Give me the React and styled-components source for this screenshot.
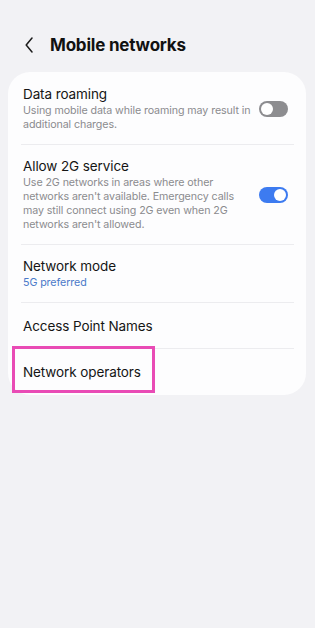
import React from "react";
import styled, { createGlobalStyle } from "styled-components";

const Global = createGlobalStyle`
  html, body { margin: 0; padding: 0; background: #f2f2f5; }
  body { font-family: Inter, "Noto Sans", "Liberation Sans", sans-serif; -webkit-font-smoothing: antialiased; }
  * { box-sizing: border-box; }
`;

const Page = styled.div`
  width: 315px;
  min-height: 628px;
  background: #f2f2f5;
  padding: 33px 9px 0 8px;
`;

const Header = styled.div`
  display: flex;
  align-items: center;
  height: 24px;
  padding-left: 17px;
  gap: 17px;
`;

const Title = styled.h1`
  margin: 0;
  font-size: 17px;
  line-height: 24px;
  font-weight: 700;
  color: #111;
  letter-spacing: -0.2px;
`;

const Card = styled.div`
  margin-top: 15px;
  background: #fdfdfe;
  border-radius: 22px;
  padding-bottom: 1px;
`;

const Row = styled.div`
  position: relative;
  display: flex;
  align-items: center;
  gap: 6px;
  min-height: ${(p) => (p.$single ? "46px" : "0")};
  padding: 12px 18px 12px 15px;
  &:first-child { padding-top: 13px; }
`;

const Divided = styled.div`
  position: relative;
  &::before {
    content: "";
    position: absolute;
    left: 13px;
    right: 12px;
    top: 0;
    height: 1px;
    background: #ececef;
  }
`;

const Texts = styled.div`
  flex: 1;
  min-width: 0;
`;

const RowTitle = styled.div`
  font-size: 13.5px;
  line-height: 18px;
  color: #151515;
  letter-spacing: -0.1px;
`;

const Sub = styled.div`
  margin-top: 1px;
  font-size: 10.7px;
  line-height: 14px;
  color: ${(p) => (p.$accent ? "#4b79c9" : "#8b8b8e")};
  letter-spacing: -0.1px;
`;

const Track = styled.div`
  flex: none;
  position: relative;
  width: 29px;
  height: 16px;
  border-radius: 8px;
  background: ${(p) => (p.$on ? "#3d7bf0" : "#8d8d90")};
`;

const Knob = styled.div`
  position: absolute;
  top: 2px;
  left: ${(p) => (p.$on ? "15px" : "2px")};
  width: 12px;
  height: 12px;
  border-radius: 50%;
  background: #fff;
`;

const Highlight = styled.div`
  position: absolute;
  top: -2px;
  left: 4px;
  width: 143px;
  height: 47px;
  border: 3px solid #e94bb5;
  pointer-events: none;
`;

const Toggle = ({ on }) => (
  <Track $on={on}>
    <Knob $on={on} />
  </Track>
);

const Chevron = () => (
  <svg width="8" height="16" viewBox="0 0 8 16" fill="none">
    <polyline points="7,1 1.2,8 7,15" stroke="#1c1c1c" strokeWidth="1.5" strokeLinecap="round" strokeLinejoin="round" />
  </svg>
);

const Item = ({ first, children, single }) => {
  const row = <Row $single={single}>{children}</Row>;
  return first ? row : <Divided>{row}</Divided>;
};

export default function App() {
  return (
    <>
      <Global />
      <Page>
        <Header>
          <Chevron />
          <Title>Mobile networks</Title>
        </Header>
        <Card>
          <Item first>
            <Texts>
              <RowTitle>Data roaming</RowTitle>
              <Sub>Using mobile data while roaming may result in additional charges.</Sub>
            </Texts>
            <Toggle on={false} />
          </Item>
          <Item>
            <Texts>
              <RowTitle>Allow 2G service</RowTitle>
              <Sub>
                Use 2G networks in areas where other networks aren't available. Emergency calls
                may still connect using 2G even when 2G networks aren't allowed.
              </Sub>
            </Texts>
            <Toggle on />
          </Item>
          <Item>
            <Texts>
              <RowTitle>Network mode</RowTitle>
              <Sub $accent>5G preferred</Sub>
            </Texts>
          </Item>
          <Item single>
            <Texts>
              <RowTitle>Access Point Names</RowTitle>
            </Texts>
          </Item>
          <Divided>
            <Row $single>
              <Texts>
                <RowTitle>Network operators</RowTitle>
              </Texts>
              <Highlight />
            </Row>
          </Divided>
        </Card>
      </Page>
    </>
  );
}
